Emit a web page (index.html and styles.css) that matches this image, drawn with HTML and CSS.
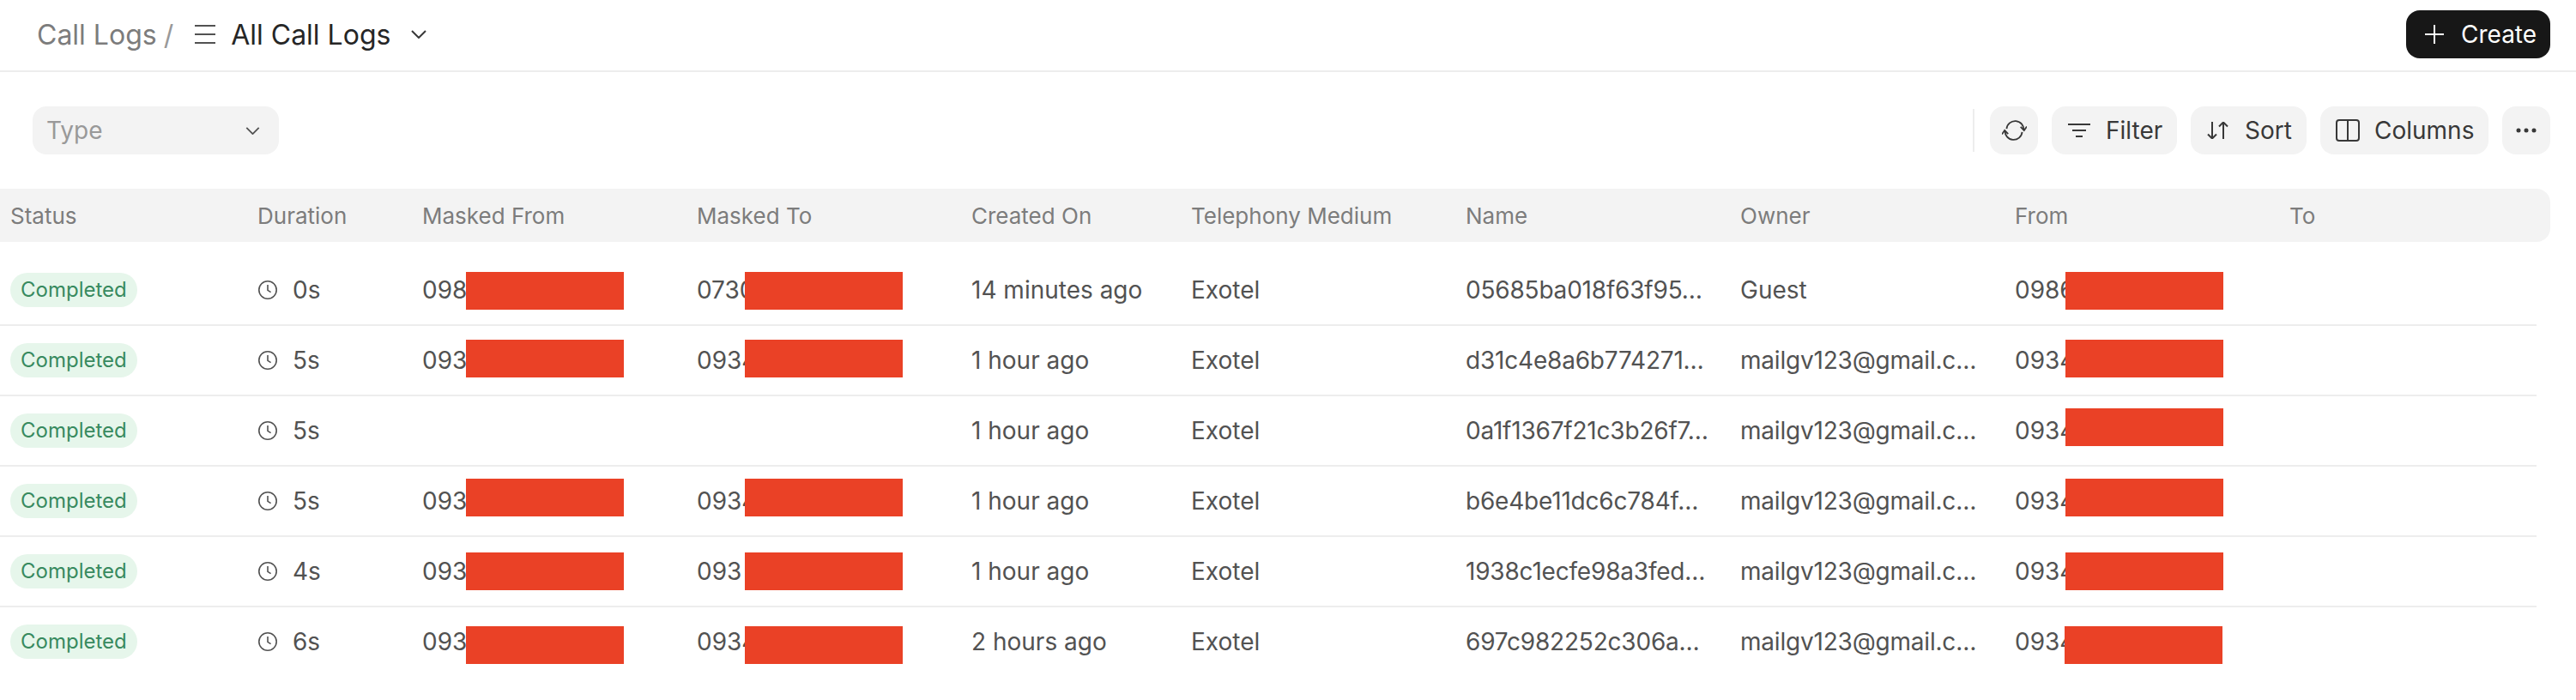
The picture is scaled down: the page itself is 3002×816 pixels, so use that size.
FILE: index.html
```html
<!DOCTYPE html>
<html lang="en">
<head>
<meta charset="utf-8">
<title>Call Logs</title>
<link rel="stylesheet" href="styles.css">
</head>
<body>
<svg class="sprite" width="0" height="0" aria-hidden="true">
  <symbol id="clock" viewBox="0 0 22 22"><circle cx="11" cy="11" r="10.2"/><path d="M11 5v6.4l3.6 2.2"/></symbol>
  <symbol id="chev" viewBox="0 0 18 10"><path d="M1 1l8 8 8-8"/></symbol>
</svg>
<header class="topbar">
  <nav class="crumbs">
    <span class="crumb-parent">Call Logs</span>
    <span class="crumb-sep">/</span>
    <svg class="icon-menu" viewBox="0 0 24 22"><path d="M0 1h24M0 11h24M0 21h24"/></svg>
    <span class="crumb-current">All Call Logs</span>
    <svg class="icon-chev"><use href="#chev"/></svg>
  </nav>
  <button class="btn-create">
    <svg class="icon-plus" viewBox="0 0 22 22"><path d="M11 0v22M0 11h22"/></svg>
    <span>Create</span>
  </button>
</header>

<section class="toolbar">
  <div class="select-type">
    <span>Type</span>
    <svg class="icon-chev icon-chev-sm"><use href="#chev"/></svg>
  </div>
  <div class="actions">
    <span class="divider"></span>
    <button class="btn btn-icon">
      <svg class="icon-refresh" viewBox="-1 0 32 26"><path d="M5 11A11 11 0 0 1 27 13"/><path d="M23 8.500l4.500 4.500 3.500-5"/><path d="M25 15A11 11 0 0 1 3 13"/><path d="M7 17.500L2.500 13-1 18"/></svg>
    </button>
    <button class="btn btn-filter">
      <svg class="icon-filter" viewBox="0 0 26 16"><path d="M0 1h26M5 8h16M9 15h8"/></svg>
      <span>Filter</span>
    </button>
    <button class="btn btn-sort">
      <svg class="icon-sort" viewBox="0 0 25 20"><path d="M6 0v19.500M1 14.500l5 5 5-5M19 20V.500M14 5.500l5-5 5 5"/></svg>
      <span>Sort</span>
    </button>
    <button class="btn btn-columns">
      <svg class="icon-columns" viewBox="0 0 28 26"><rect x="1" y="1" width="26" height="24" rx="3"/><path d="M14 1v24"/></svg>
      <span>Columns</span>
    </button>
    <button class="btn btn-icon">
      <svg class="icon-more" viewBox="0 0 24 6"><circle cx="3" cy="3" r="2.500"/><circle cx="12" cy="3" r="2.500"/><circle cx="21" cy="3" r="2.500"/></svg>
    </button>
  </div>
</section>

<section class="table">
  <div class="thead grid">
    <span>Status</span><span>Duration</span><span>Masked From</span><span>Masked To</span><span>Created On</span><span>Telephony Medium</span><span>Name</span><span>Owner</span><span>From</span><span>To</span>
  </div>
  <div class="tbody">
    <div class="row grid row-1">
      <span class="badge">Completed</span>
      <span class="dur"><svg class="icon-clock"><use href="#clock"/></svg>0s</span>
      <span class="cell">098<i class="redact"></i></span>
      <span class="cell">0730<i class="redact"></i></span>
      <span>14 minutes ago</span><span>Exotel</span><span class="trunc">05685ba018f63f95…</span><span>Guest</span>
      <span class="cell">0986<i class="redact redact-from"></i></span><span></span>
    </div>
    <div class="row grid row-2">
      <span class="badge">Completed</span>
      <span class="dur"><svg class="icon-clock"><use href="#clock"/></svg>5s</span>
      <span class="cell">093<i class="redact"></i></span>
      <span class="cell">0934<i class="redact"></i></span>
      <span>1 hour ago</span><span>Exotel</span><span class="trunc">d31c4e8a6b774271…</span><span class="trunc">mailgv123@gmail.c…</span>
      <span class="cell">0934<i class="redact redact-from"></i></span><span></span>
    </div>
    <div class="row grid row-3">
      <span class="badge">Completed</span>
      <span class="dur"><svg class="icon-clock"><use href="#clock"/></svg>5s</span>
      <span></span>
      <span></span>
      <span>1 hour ago</span><span>Exotel</span><span class="trunc">0a1f1367f21c3b26f7…</span><span class="trunc">mailgv123@gmail.c…</span>
      <span class="cell">0934<i class="redact redact-from"></i></span><span></span>
    </div>
    <div class="row grid row-4">
      <span class="badge">Completed</span>
      <span class="dur"><svg class="icon-clock"><use href="#clock"/></svg>5s</span>
      <span class="cell">093<i class="redact"></i></span>
      <span class="cell">0934<i class="redact"></i></span>
      <span>1 hour ago</span><span>Exotel</span><span class="trunc">b6e4be11dc6c784f…</span><span class="trunc">mailgv123@gmail.c…</span>
      <span class="cell">0934<i class="redact redact-from"></i></span><span></span>
    </div>
    <div class="row grid row-5">
      <span class="badge">Completed</span>
      <span class="dur"><svg class="icon-clock"><use href="#clock"/></svg>4s</span>
      <span class="cell">093<i class="redact"></i></span>
      <span class="cell">093<i class="redact"></i></span>
      <span>1 hour ago</span><span>Exotel</span><span class="trunc">1938c1ecfe98a3fed…</span><span class="trunc">mailgv123@gmail.c…</span>
      <span class="cell">0934<i class="redact redact-from"></i></span><span></span>
    </div>
    <div class="row grid row-6">
      <span class="badge">Completed</span>
      <span class="dur"><svg class="icon-clock"><use href="#clock"/></svg>6s</span>
      <span class="cell">093<i class="redact"></i></span>
      <span class="cell">0934<i class="redact"></i></span>
      <span>2 hours ago</span><span>Exotel</span><span class="trunc">697c982252c306a…</span><span class="trunc">mailgv123@gmail.c…</span>
      <span class="cell">0934<i class="redact redact-from redact-last"></i></span><span></span>
    </div>
  </div>
</section>
</body>
</html>
```
FILE: styles.css
```css
* { box-sizing: border-box; }
html, body { margin: 0; padding: 0; background: #fff; }
body {
  width: 3002px;
  height: 816px;
  overflow: hidden;
  font-family: Inter, "Liberation Sans", sans-serif;
  color: #525252;
}
.sprite { position: absolute; }
svg { display: block; fill: none; stroke: currentColor; stroke-width: 2; flex: none; }

.topbar {
  height: 84px;
  border-bottom: 2px solid #ededed;
  display: flex;
  align-items: center;
  justify-content: space-between;
  padding: 0 30px 2px 43px;
}
.crumbs { display: flex; align-items: center; font-size: 32px; }
.crumb-parent { color: #7c7c7c; }
.crumb-sep { color: #999; margin-left: 8px; }
.icon-menu { width: 24px; height: 22px; margin-left: 25px; color: #525252; }
.crumb-current { color: #262626; margin-left: 18px; }
.icon-chev { width: 18px; height: 10px; margin-left: 24px; color: #383838; }

.btn-create {
  width: 168px;
  height: 56px;
  border: 0;
  border-radius: 16px;
  background: #171717;
  color: #fff;
  font: inherit;
  font-size: 28px;
  display: flex;
  align-items: center;
  padding: 0 0 0 22px;
  gap: 20px;
}
.icon-plus { width: 22px; height: 22px; }

.toolbar {
  display: flex;
  justify-content: space-between;
  padding: 40px 30px 0 38px;
}
.select-type {
  width: 287px;
  height: 56px;
  border-radius: 16px;
  background: #f3f3f3;
  color: #999;
  font-size: 28px;
  display: flex;
  align-items: center;
  justify-content: space-between;
  padding: 0 22px 0 16px;
}
.icon-chev-sm { width: 17px; height: 9px; margin: 0; color: #525252; }

.actions { display: flex; align-items: center; gap: 16px; }
.divider { width: 2px; height: 50px; background: #ededed; margin-right: 2px; }
.btn {
  height: 56px;
  border: 0;
  border-radius: 16px;
  background: #f3f3f3;
  color: #383838;
  font: inherit;
  font-size: 28px;
  display: flex;
  align-items: center;
  padding: 0;
}
.btn-icon { width: 56px; justify-content: center; }
.btn-filter { width: 146px; padding-left: 19px; gap: 18px; }
.btn-sort { width: 135px; padding-left: 19px; gap: 19px; }
.btn-columns { width: 196px; padding-left: 18px; gap: 17px; }
.icon-refresh { width: 29px; height: 24px; }
.icon-filter { width: 26px; height: 16px; }
.icon-sort { width: 25px; height: 20px; }
.icon-columns { width: 28px; height: 26px; }
.icon-more { width: 24px; height: 6px; fill: currentColor; stroke: none; }

.table { margin-top: 40px; width: 2972px; }
.grid {
  display: grid;
  grid-template-columns: 288px 192px 320px 320px 256px 320px 320px 320px 320px 1fr;
  padding-left: 12px;
  align-items: center;
}
.thead {
  height: 62px;
  background: #f3f3f3;
  border-radius: 0 16px 16px 0;
  color: #7c7c7c;
  font-size: 26px;
}
.tbody { width: 2956px; margin-top: 16px; }
.row {
  height: 82px;
  border-bottom: 2px solid #ededed;
  font-size: 28px;
}
.row:last-child { border-bottom-color: transparent; }
.row > span { white-space: nowrap; }
.trunc { letter-spacing: -0.2px; }
.badge {
  justify-self: start;
  height: 40px;
  width: 148px;
  border-radius: 20px;
  background: #e6f6eb;
  color: #388a5f;
  font-size: 24px;
  line-height: 40px;
  padding-left: 12px;
}
.dur { display: flex; align-items: center; gap: 18px; padding-left: 1px; }
.icon-clock { width: 22px; height: 22px; color: #525252; stroke-width: 1.600; }
.cell { position: relative; }
.redact {
  position: absolute;
  left: 51px;
  width: 184px;
  height: 44px;
  background: #ea4126;
}
.cell + .cell .redact { left: 56px; }
.redact.redact-from { left: 59px; }
.redact.redact-last { left: 58px; }
.row-1 .redact { top: -4px; }
.row-2 .redact { top: -7px; }
.row-3 .redact { top: -9px; }
.row-4 .redact { top: -9px; }
.row-5 .redact { top: -5px; }
.row-6 .redact { top: -1px; }
```
